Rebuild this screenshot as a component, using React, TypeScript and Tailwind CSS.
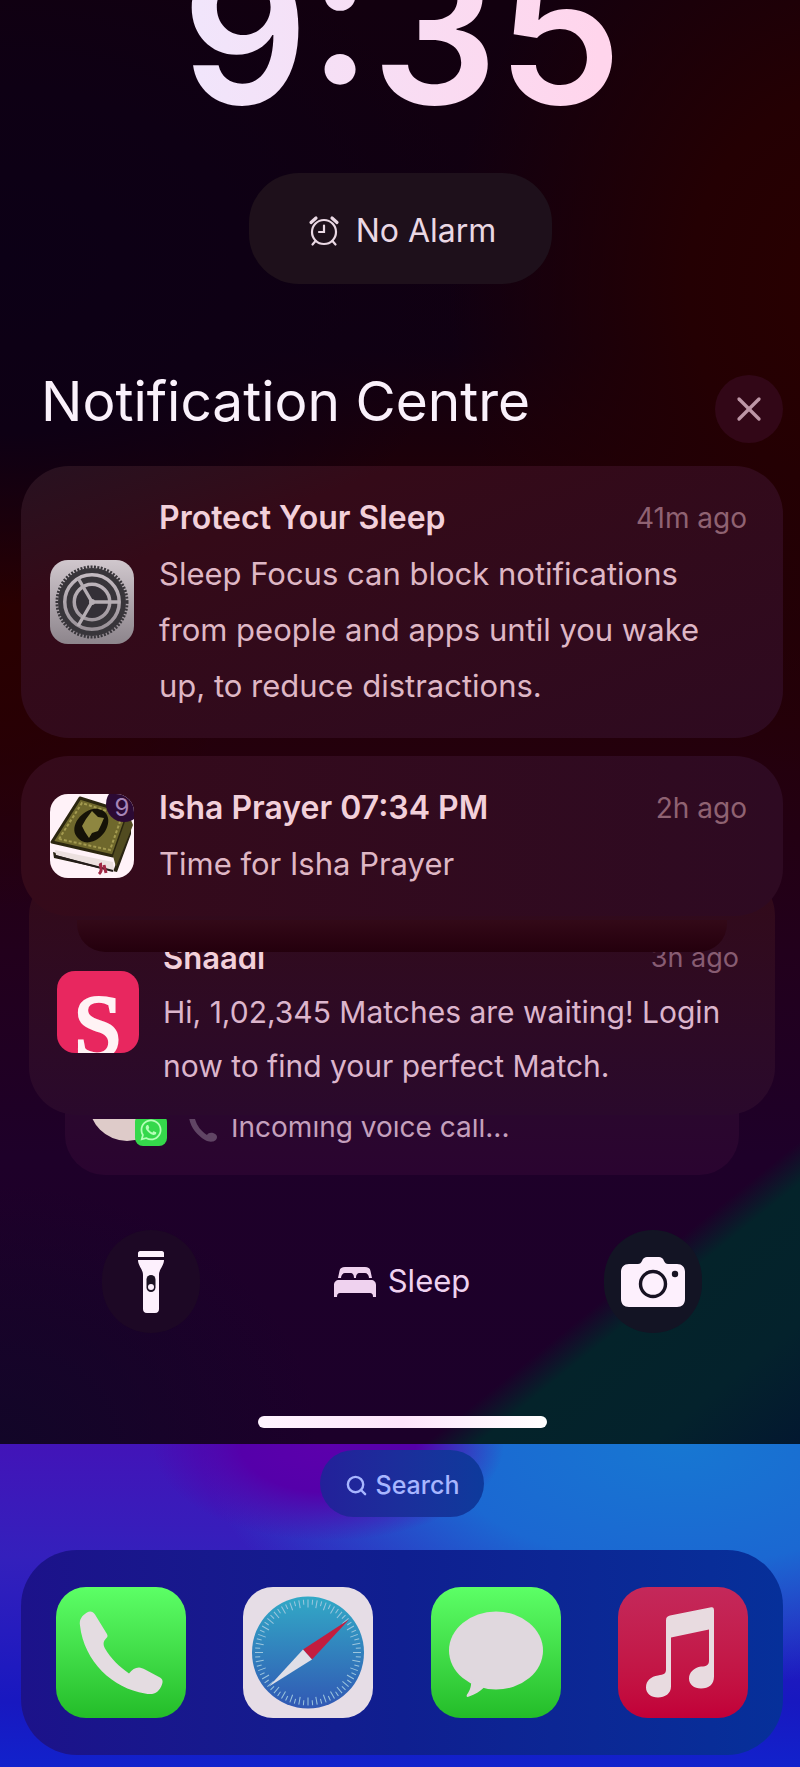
import React from "react";
import { FaWhatsapp } from "react-icons/fa";
import { LuSearch, LuX } from "react-icons/lu";

const AlarmIcon = () => (
  <svg viewBox="0 0 32 32" className="w-8 h-8" fill="none" stroke="currentColor" strokeWidth="2.2" strokeLinecap="round">
    <circle cx="16" cy="17" r="12" />
    <path d="M16 10.500V17h-5M7.500 26 4.500 29.500M24.500 26l3 3.500" />
    <path d="M3 7.500 8 3M29 7.500 24 3" strokeWidth="3.200" />
  </svg>
);

const SettingsIcon = () => (
  <svg viewBox="0 0 84 84" className="w-full h-full" fill="none">
    <circle cx="42" cy="42" r="35" stroke="#38353a" strokeWidth="3" strokeDasharray="2 1.400" />
    <circle cx="42" cy="42" r="31.500" stroke="#38353a" strokeWidth="5" />
    <circle cx="42" cy="42" r="22.500" stroke="#38353a" strokeWidth="6" />
    <circle cx="42" cy="42" r="16" fill="#343037" />
    <path d="M42 42h28M42 42 28 18M42 42 28 66" stroke="#b5adb3" strokeWidth="3.400" />
    <circle cx="42" cy="42" r="3" fill="#b5adb3" />
  </svg>
);

const BookIcon = () => (
  <svg viewBox="0 0 84 84" className="w-full h-full">
    <path d="M3 58 64 75l17-48v13L67 78 4 64z" fill="#292312" />
    <path d="M5 56 63 68l1 9L6 61z" fill="#ece0df" />
    <path d="M5 62 63 77" stroke="#241c1a" strokeWidth="2" />
    <path d="M2 48 30 4l48 15-15 43z" fill="#6f682c" stroke="#2b260f" strokeWidth="3" strokeLinejoin="round" />
    <path d="M63 62 78 19l5 12-17 42z" fill="#514b20" />
    <path d="M9 45 32 9l40 13-12 34z" fill="none" stroke="#a49b50" strokeWidth="2" strokeDasharray="3 2" />
    <path d="M27 43C18 32 34 13 48 15c16 3 11 22 1 29-8 6-17 6-22-1z" fill="#151207" />
    <path d="m42 17 6 6 6 1-3 7-3 6-6 2-3 5-4-6-3-6 4-7z" fill="#8e8640" />
    <path d="M52 70c-5 0 3 4-3 10M54 71l2 8" stroke="#a02744" strokeWidth="3" fill="none" />
  </svg>
);

const FlashlightIcon = () => (
  <svg viewBox="0 0 28 62" className="w-7 h-[62px]" fill="currentColor">
    <path d="M3 0h22c1 0 2 1 2 2v4H1V2c0-1 1-2 2-2zM1 9h26c0 6-5 9-5 15v34c0 2-1 4-4 4h-8c-3 0-4-2-4-4V24C6 18 1 15 1 9z" />
    <rect x="9.500" y="24" width="9" height="17" rx="4.500" fill="#1c1224" />
    <circle cx="14" cy="36" r="3" />
  </svg>
);

const BedIcon = () => (
  <svg viewBox="0 0 42 30" className="w-[42px] h-[30px]" fill="currentColor">
    <path d="M4 11 5.500 4C6 1 8 0 11 0h20c3 0 5 1 5.500 4L38 11h-3c0-3-2-5-4-5h-5c-3 0-4 2-4 5h-2c0-3-1-5-4-5h-5c-2 0-4 2-4 5z" />
    <path d="M0 18c0-3 2-5 5-5h32c3 0 5 2 5 5v12h-3c0-3-1-4-3-4H6c-2 0-3 1-3 4H0z" />
  </svg>
);

const CameraIcon = () => (
  <svg viewBox="0 0 64 50" className="w-16 h-[50px]">
    <path
      d="M8 7h9c2 0 3-1 4-3 1-3 3-4 5-4h12c2 0 4 1 5 4 1 2 2 3 4 3h9c5 0 8 3 8 8v27c0 5-3 8-8 8H8c-5 0-8-3-8-8V15c0-5 3-8 8-8z"
      fill="currentColor"
    />
    <circle cx="32" cy="27" r="12.500" fill="none" stroke="#171222" strokeWidth="3.400" />
    <circle cx="54" cy="17" r="3.200" fill="#171222" />
  </svg>
);

const PhoneIcon = () => (
  <svg viewBox="0 0 130 130" className="w-full h-full">
    <path
      d="M24 38c-1-6 2-10 7-13 3-2 6-1 8 2l11 18c2 3 2 4 0 6-3 3-3 6-1 10 6 10 14 18 24 25 3-4 6-6 10-6 2 0 4 1 6 2l15 8c3 2 3 4 2 7-3 8-8 11-17 9C57 101 28 74 24 38z"
      fill="#e4dce1"
    />
  </svg>
);

const ticks = Array.from({ length: 72 }, (_, i) => i * 5);

const SafariIcon = () => (
  <svg viewBox="0 0 130 130" className="w-full h-full">
    <defs>
      <linearGradient id="compass" x1="0" y1="0" x2="0" y2="1">
        <stop offset="0" stopColor="#32a9c6" />
        <stop offset="1" stopColor="#3158b4" />
      </linearGradient>
    </defs>
    <circle cx="65" cy="65" r="56" fill="url(#compass)" />
    {ticks.map((deg) => (
      <path
        key={deg}
        d={deg % 10 === 0 ? "M65 12v8" : "M65 12v5"}
        stroke="#9cc6de"
        strokeWidth="1"
        transform={`rotate(${deg} 65 65)`}
      />
    ))}
    <path d="m106 32-46 30 9 10z" fill="#c31d3f" />
    <path d="m26 99 34-37 9 10z" fill="#dfdfe7" />
  </svg>
);

const MessagesIcon = () => (
  <svg viewBox="0 0 130 130" className="w-full h-full" fill="#e0d8de">
    <ellipse cx="65" cy="63" rx="47" ry="39" />
    <path d="M40 90c1 8-1 13-4 17-1 2 0 3 2 2 6-2 11-5 15-9z" />
  </svg>
);

const MusicIcon = () => (
  <svg viewBox="0 0 130 130" className="w-full h-full" fill="#e8dbe0">
    <path d="M48 33c0-3 1-4 4-5l40-8c3-1 4 0 4 3v66c0 8-5 12-13 12-7 0-12-4-12-10s5-11 12-12c6 0 8-2 8-6V42l-38 8v49c0 7-6 11-13 11-7 0-12-4-12-10 0-7 5-11 12-12 6-1 8-2 8-6z" />
  </svg>
);

const dockApps = [
  { name: "Phone", icon: <PhoneIcon />, bg: "bg-linear-to-b from-[#5cff66] to-[#23bd28]" },
  { name: "Safari", icon: <SafariIcon />, bg: "bg-[#e6dde6]" },
  { name: "Messages", icon: <MessagesIcon />, bg: "bg-linear-to-b from-[#5cff66] to-[#23bd28]" },
  { name: "Music", icon: <MusicIcon />, bg: "bg-linear-to-b from-[#c4285a] to-[#c20038]" },
];

interface NotificationProps {
  title: string;
  time: string;
  text: string;
  icon: React.ReactNode;
  className: string;
}

const Notification = ({ title, time, text, icon, className }: NotificationProps) => (
  <article className={`relative z-10 flex items-center rounded-[48px] py-6 pl-[29px] pr-9 ${className}`}>
    {icon}
    <div className="flex-1 min-w-0 ml-[25px] text-[31px] leading-[56px]">
      <div className="flex justify-between">
        <h2 className="text-[32px] font-semibold text-[#f2d0da]">{title}</h2>
        <time className="text-[28px] text-[#8f6272]">{time}</time>
      </div>
      <p className="pr-4 text-[#dfb7c5]">{text}</p>
    </div>
  </article>
);

const App = () => {
  return (
    <div className="font-['Inter','Liberation_Sans',sans-serif] overflow-hidden">
      {/* lock screen */}
      <main
        className="flow-root overflow-hidden bg-[#1d0020] bg-[linear-gradient(to_bottom_right,transparent_50%,#04232a_57%,#04222c_80%,#031830_100%),radial-gradient(ellipse_60%_24%_at_0%_18%,#0c0016_0%,#0e0014_50%,transparent_100%),radial-gradient(ellipse_30%_20%_at_0%_43%,#2a0000_0%,transparent_100%),radial-gradient(ellipse_50%_34%_at_106%_20%,#290000_0%,#240003_40%,transparent_100%),radial-gradient(ellipse_40%_18%_at_0%_100%,#120628_0%,transparent_100%),linear-gradient(180deg,#12000f_0%,#100012_24%,#1e0008_33%,#24000a_50%,#22001c_66%,#1e0029_80%,#1c002a_100%)] bg-no-repeat bg-[length:47%_21%,100%_100%,100%_100%,100%_100%,100%_100%,100%_100%] bg-[position:100%_100%,0_0,0_0,0_0,0_0,0_0]"
      >
        <h1 className="-mt-[67px] pl-1 text-center text-[198px] leading-[198px] font-semibold text-transparent bg-clip-text bg-linear-to-r from-[#f1e5fb] from-25% to-[#ffd5ec] to-75%">
          9:35
        </h1>

        <button className="mt-[42px] mx-auto w-[303px] h-[111px] rounded-[50px] bg-[#1e101b] flex items-center justify-center gap-4 pt-1 pl-1 text-[32px] text-[#ead8e4]">
          <AlarmIcon />
          No Alarm
        </button>

        <section className="mt-[85px] pl-[21px] pr-[17px]">
          <div className="flex items-start justify-between pl-5 h-[74px]">
            <h2 className="text-[55px] leading-[64px] text-[#faf1fb] whitespace-nowrap">Notification Centre</h2>
            <button aria-label="Close" className="self-end w-[68px] h-[68px] rounded-full bg-[#320717] flex items-center justify-center text-[#bd96a6]">
              <LuX size={40} strokeWidth={2} />
            </button>
          </div>

          <div className="mt-[23px] flex flex-col">
            <Notification
              title="Protect Your Sleep"
              time="41m ago"
              text="Sleep Focus can block notifications from people and apps until you wake up, to reduce distractions."
              className="bg-linear-to-br from-[#271120] via-[#340a18] via-25% to-[#2e0a20]"
              icon={
                <div className="w-[84px] h-[84px] rounded-[18px] bg-linear-to-b from-[#d0c7cd] to-[#8d858c]">
                  <SettingsIcon />
                </div>
              }
            />
            <Notification
              title="Isha Prayer 07:34 PM"
              time="2h ago"
              text="Time for Isha Prayer"
              className="mt-[18px] bg-linear-to-r from-[#350a1a] to-[#2e0a22]"
              icon={
                <div className="relative w-[84px] h-[84px] rounded-[18px] bg-[#fff2f8] overflow-hidden">
                  <BookIcon />
                  <span className="absolute -top-2 -right-2 w-9 h-9 rounded-full bg-[#2c0a34] text-[#a685b8] text-2xl leading-9 pr-1 pt-1 text-center">
                    9
                  </span>
                </div>
              }
            />

            {/* collapsed stack */}
            <article className="relative -mt-12 mx-2 pt-[52px] pb-[22px] rounded-[48px] z-[5] bg-linear-to-b from-[#330a18] to-[#2a092c]">
              <div className="h-8 mx-12 rounded-b-[28px] bg-linear-to-b from-[#330a18] to-[#24000d]" />
              <div className="overflow-hidden pl-7 pr-9">
                <div className="-mt-[21px] flex items-center">
                  <div className="w-[82px] h-[82px] rounded-[18px] bg-[#e8275f] overflow-hidden text-center">
                    <span className="block mt-3 text-[88px] leading-[88px] font-medium font-['Liberation_Serif',serif] text-[#fff3f5] [-webkit-text-stroke:3px_#fff3f5]">
                      S
                    </span>
                  </div>
                  <div className="flex-1 min-w-0 ml-6 text-[31px] leading-[54px]">
                    <div className="flex justify-between">
                      <h2 className="font-semibold text-[#f2d0da]">Shaadi</h2>
                      <time className="text-[27px] text-[#875c72]">3h ago</time>
                    </div>
                    <p className="-mr-4 text-[30px] text-[#dcb5cc]">Hi, 1,02,345 Matches are waiting! Login now to find your perfect Match.</p>
                  </div>
                </div>
              </div>
            </article>

            <article className="-mt-12 mx-11 pt-[52px] h-[108px] rounded-b-[40px] bg-linear-to-b from-[#2a092c] to-[#2a0430]">
              <div className="overflow-hidden h-11 pl-6">
                <div className="-mt-[54px] flex items-end h-[81px]">
                  <div className="relative w-[78px] h-[81px]">
                    <div className="w-[76px] h-[76px] rounded-full bg-[#decbc9]" />
                    <span className="absolute right-0 bottom-0 w-8 h-8 rounded-lg bg-[#35d84b] flex items-center justify-center text-[#b5ffb7]">
                      <FaWhatsapp size={24} />
                    </span>
                  </div>
                  <svg viewBox="0 0 32 32" className="ml-5 w-8 h-8 shrink-0" fill="#604564">
                    <path d="M2 3c2-3 5-1 6 2 2 7 6 12 12 16 2-4 10-2 10 2 0 5-7 6-12 3C10 21 3 13 2 3z" />
                  </svg>
                  <p className="ml-3 text-[28px] leading-[38px] text-[#c5a0bd]">Incoming voice call...</p>
                </div>
              </div>
            </article>
          </div>
        </section>

        <div className="mt-[55px] pl-[102px] pr-[98px] flex items-center justify-between text-[#fdf0fd]">
          <button aria-label="Flashlight" className="w-[98px] h-[103px] rounded-full bg-[#1d0825] flex items-center justify-center">
            <FlashlightIcon />
          </button>
          <button className="flex items-center gap-3 text-[31px] text-[#efd2ef]">
            <BedIcon />
            Sleep
          </button>
          <button aria-label="Camera" className="w-[98px] h-[103px] rounded-full bg-[#131424] flex items-center justify-center">
            <CameraIcon />
          </button>
        </div>

        <div className="mt-[83px] mb-4 pl-1 flex justify-center">
          <div className="w-[289px] h-3 rounded-full bg-linear-to-r from-[#fff4ff] via-[#fde4fb] to-white" />
        </div>
      </main>

      {/* home screen */}
      <footer className="flow-root pl-[21px] pr-[17px] pb-3 bg-[#1720c8] bg-[radial-gradient(ellipse_22%_30%_at_41%_0%,#5c00ac_0%,#5500aa_50%,transparent_100%),radial-gradient(ellipse_60%_75%_at_85%_0%,#1777d2_0%,#1b68d2_50%,transparent_100%),linear-gradient(180deg,#4214b8_0%,#3420bc_35%,#1818c0_80%,#1222cc_100%)]">
        <button className="mt-1.5 mx-auto w-[164px] h-[67px] rounded-[34px] bg-linear-to-r from-[#23209a] to-[#0d3a9c] flex items-center justify-center gap-2 pt-1 text-[25px] font-medium text-[#a8b6ff]">
          <LuSearch size={23} strokeWidth={2.500} />
          Search
        </button>
        <nav className="mt-[33px] px-[35px] py-[37px] rounded-[56px] flex justify-between bg-linear-to-r from-[#1c128a] via-[#0f1f90] to-[#06309a]">
          {dockApps.map((app) => (
            <a
              key={app.name}
              href="#"
              aria-label={app.name}
              className={`block w-[130px] h-[131px] rounded-[30px] overflow-hidden ${app.bg}`}
            >
              {app.icon}
            </a>
          ))}
        </nav>
      </footer>
    </div>
  );
};

export default App;
